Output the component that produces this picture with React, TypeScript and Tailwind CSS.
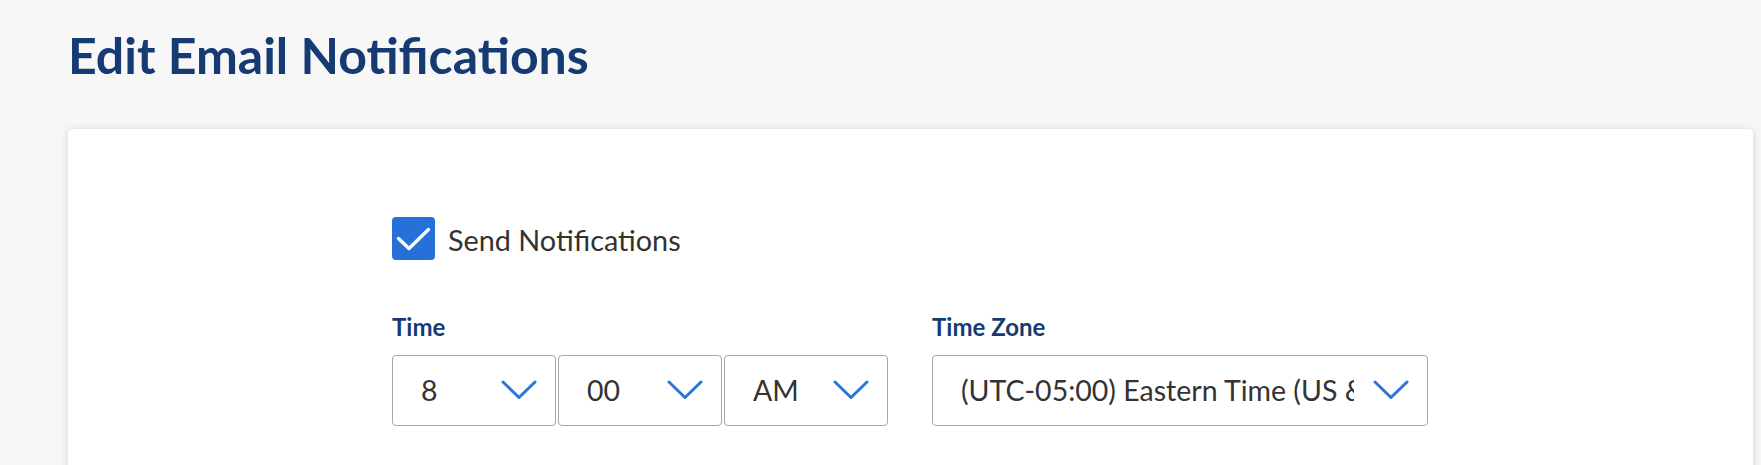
import React from "react";

const Chevron: React.FC = () => (
  <svg width="36" height="20" viewBox="0 0 36 20" fill="none" className="shrink-0">
    <path d="M2 2 L18 17.5 L34 2" stroke="#2b74d9" strokeWidth={3} strokeLinecap="round" strokeLinejoin="round" />
  </svg>
);

interface SelectBoxProps {
  value: string;
  className?: string;
}

const SelectBox: React.FC<SelectBoxProps> = ({ value, className = "" }) => (
  <div
    className={`relative h-[71px] bg-white border border-[#a6a6a6] rounded-[4px] flex items-center pl-[28px] ${className}`}
  >
    {/* text area stops short of the chevron, so long values are clipped */}
    <span className="block flex-1 min-w-0 mr-[73px] overflow-hidden whitespace-nowrap text-[28.5px] leading-[1.2] text-[#333333]">
      {value}
    </span>
    <div className="absolute right-[18px] top-0 bottom-0 flex items-center">
      <Chevron />
    </div>
  </div>
);

export default function App() {
  return (
    <div className="h-screen overflow-hidden bg-[#f7f7f7] font-['Lato',sans-serif]">
      {/* Page title */}
      <h1 className="pt-[25px] pl-[68px] text-[50px] leading-[1.2] font-bold text-[#163b72]">
        Edit Email Notifications
      </h1>

      {/* Card */}
      <div className="mt-[44px] ml-[68px] mr-[8px] h-[400px] bg-white rounded-[5px] shadow-[0_1px_8px_rgba(0,0,0,0.14)]">
        <div className="pt-[88px] pl-[324px]">
          {/* Send notifications checkbox */}
          <label className="flex items-center gap-[13px]">
            <span className="w-[43px] h-[43px] rounded-[4px] bg-[#2671d9] flex items-center justify-center">
              <svg width="43" height="43" viewBox="0 0 43 43" fill="none">
                <path d="M6.5 21.5 L17 31.5 L36.5 12.5" stroke="#ffffff" strokeWidth={3.4} strokeLinecap="round" strokeLinejoin="round" />
              </svg>
            </span>
            <span className="text-[28.8px] leading-[1.2] pt-[3px] text-[#333333]">Send Notifications</span>
          </label>

          {/* Time + Time zone */}
          <div className="mt-[53px] flex gap-[44px]">
            <div>
              <div className="text-[24px] leading-[1.2] font-bold text-[#163b72] mb-[13px]">Time</div>
              <div className="flex gap-[2px]">
                <SelectBox value="8" className="w-[164px]" />
                <SelectBox value="00" className="w-[164px]" />
                <SelectBox value="AM" className="w-[164px]" />
              </div>
            </div>
            <div>
              <div className="text-[24px] leading-[1.2] font-bold text-[#163b72] mb-[13px]">Time Zone</div>
              <SelectBox value="(UTC-05:00) Eastern Time (US & Canada)" className="w-[496px]" />
            </div>
          </div>
        </div>
      </div>
    </div>
  );
}
